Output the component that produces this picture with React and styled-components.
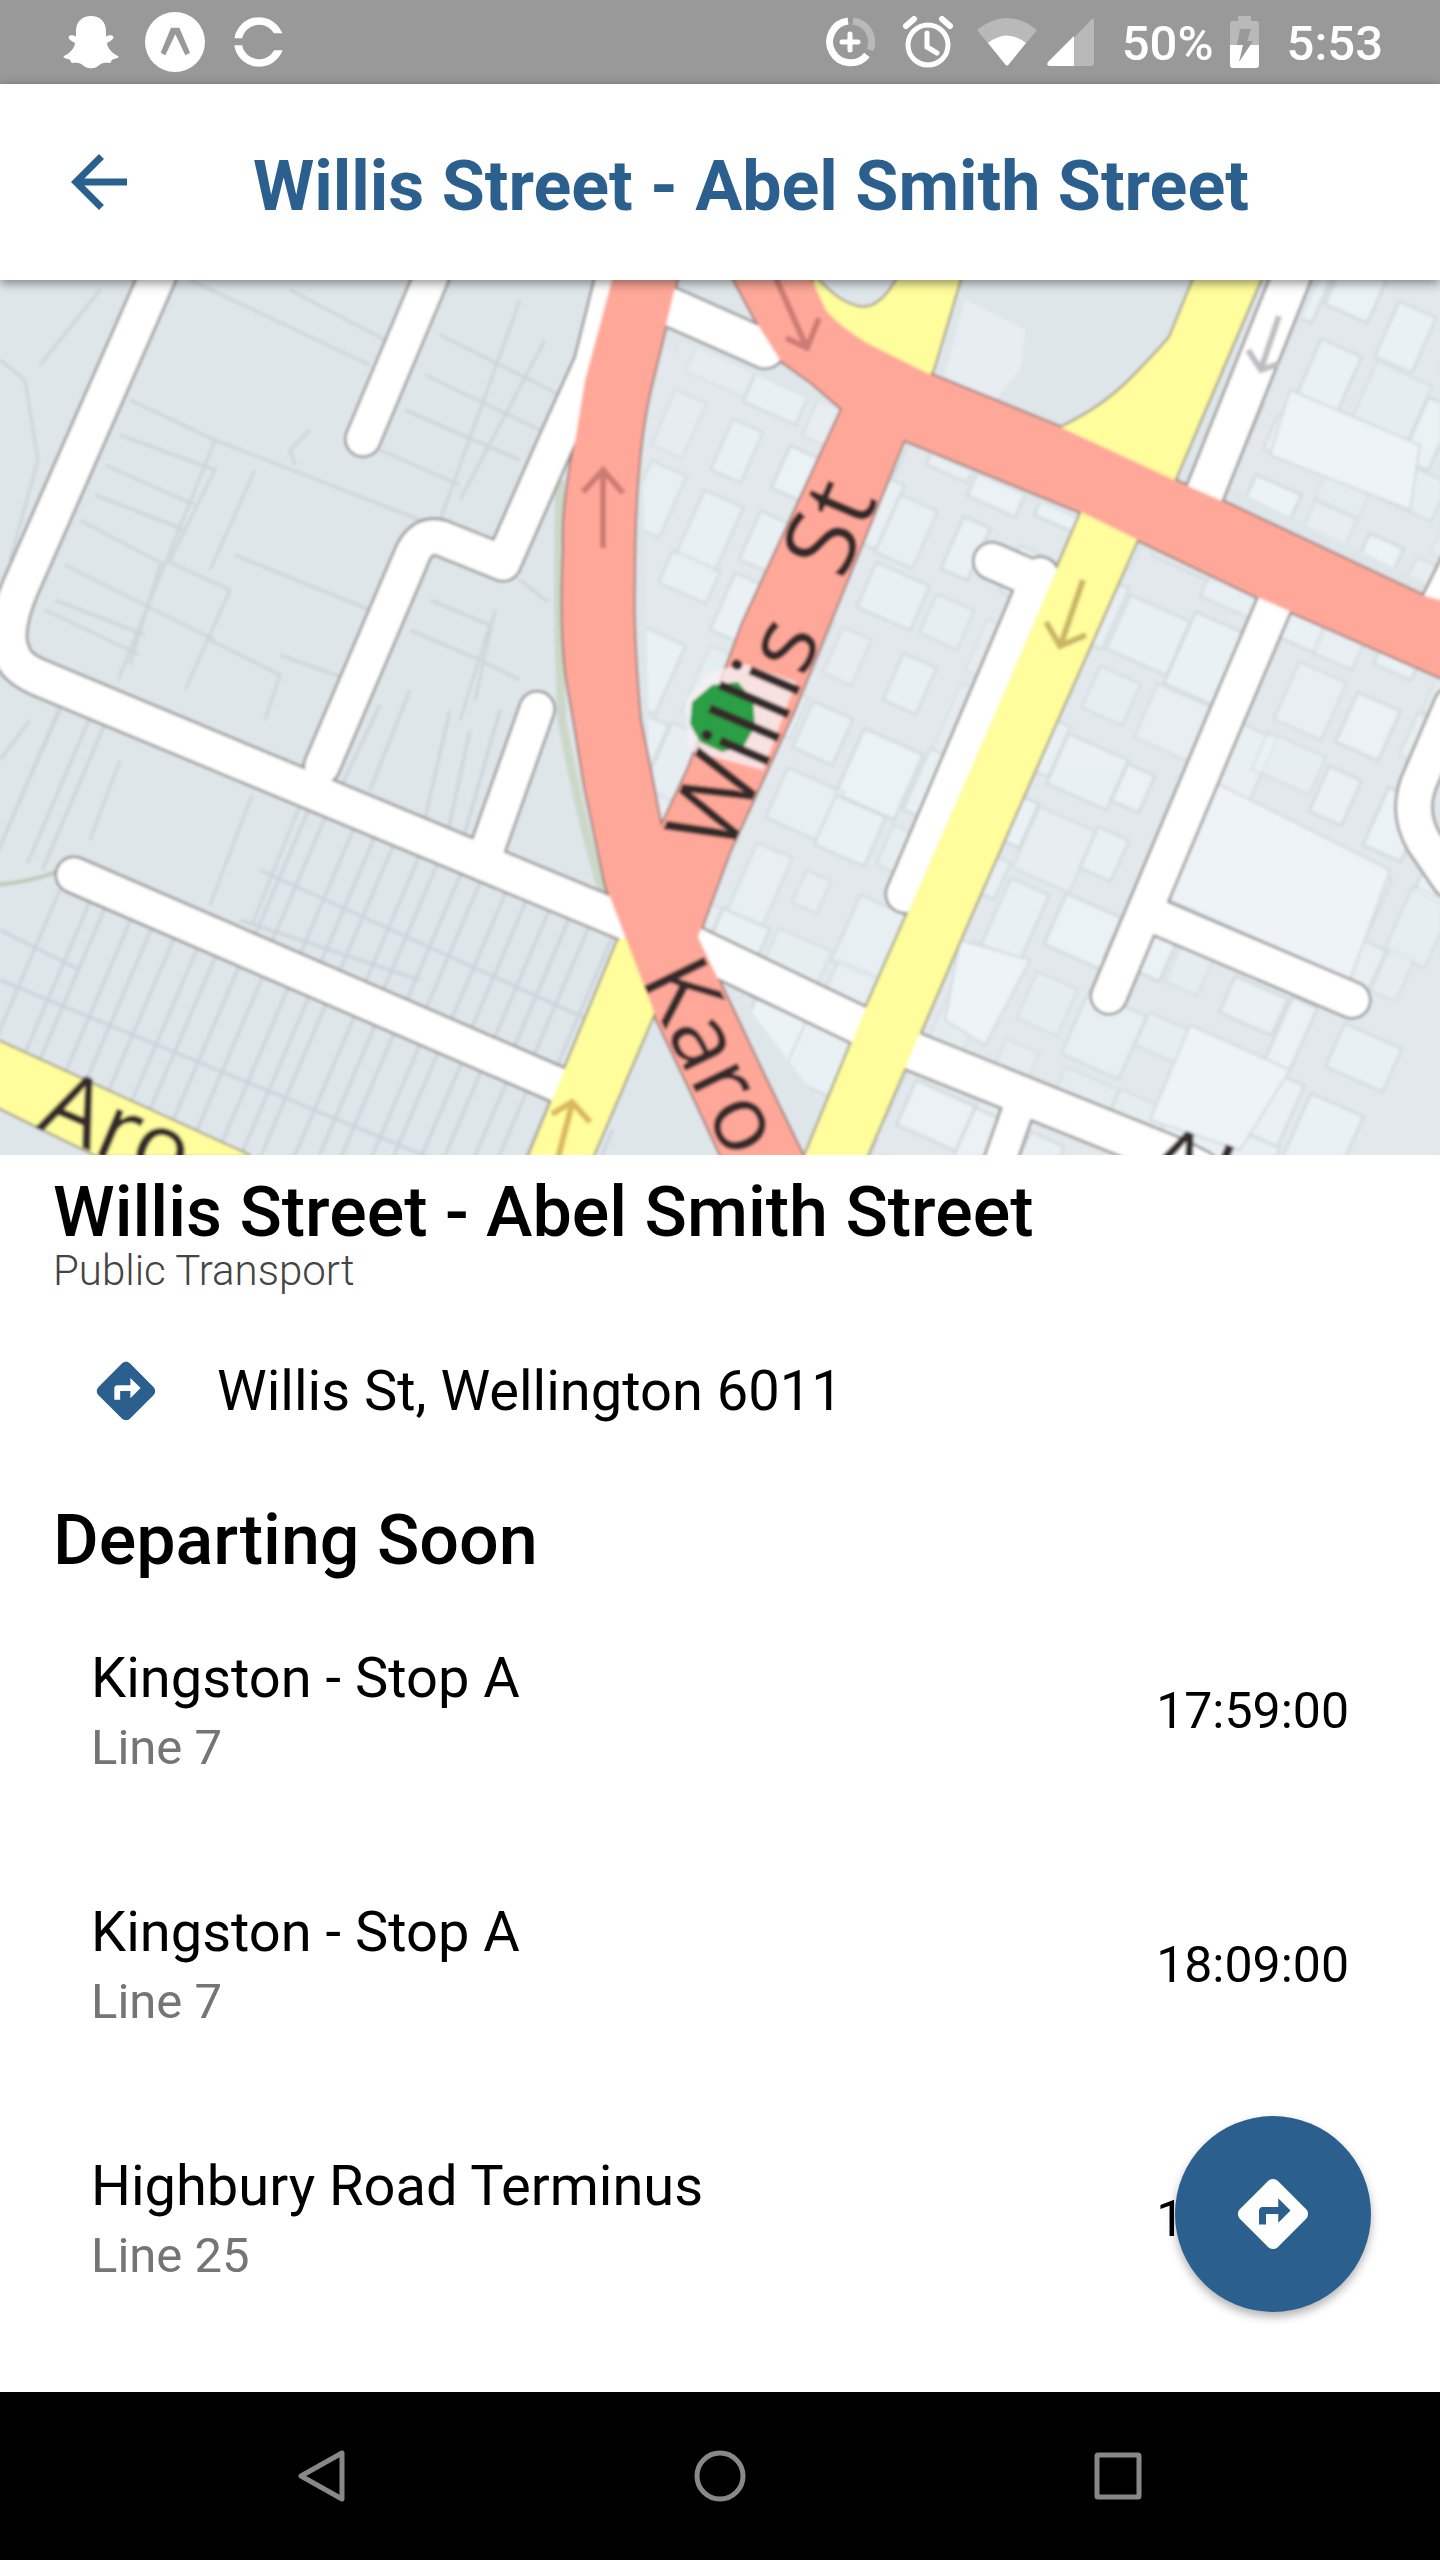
import React from "react";
import styled, { createGlobalStyle } from "styled-components";
import { MdArrowBack, MdDirections } from "react-icons/md";

const GlobalStyle = createGlobalStyle`
  * { box-sizing: border-box; }
  body { margin: 0; background: #fff; }
  h1, h2, p, ul { margin: 0; padding: 0; }
  ul { list-style: none; }
  button { border: 0; padding: 0; background: none; font: inherit; cursor: pointer; }
  svg { display: block; }
`;

const brand = "#2b5f8e";

const Screen = styled.div`
  min-height: 100vh;
  display: flex;
  flex-direction: column;
  background: #fff;
  color: #000;
  font-family: Roboto, "Noto Sans", sans-serif;
`;

const StatusBar = styled.div`
  height: 84px;
  padding: 0 57px 0 62px;
  display: flex;
  align-items: center;
  justify-content: space-between;
  background: #999;
  color: #fff;
  font-size: 49px;
  line-height: 58px;
  font-weight: 500;
`;

const StatusGroup = styled.div`
  display: flex;
  align-items: center;
  gap: ${(p) => p.$gap}px;
`;

const StatusText = styled.span`
  padding-top: 4px;
`;

const Header = styled.header`
  position: relative;
  z-index: 1;
  height: 196px;
  padding: 0 57px;
  display: flex;
  align-items: center;
  gap: 112px;
  background: #fff;
  box-shadow: 0 3px 10px rgba(0, 0, 0, 0.45);
`;

const BackButton = styled.button`
  color: ${brand};
`;

const HeaderTitle = styled.h1`
  padding-top: 8px;
  color: ${brand};
  font-size: 70px;
  line-height: 82px;
  font-weight: 700;
`;

const MapFrame = styled.div`
  overflow: hidden;
  svg { width: 100%; height: auto; }
`;

const Content = styled.main`
  position: relative;
  flex: 1;
  padding-bottom: 40px;
`;

const PlaceSection = styled.section`
  padding: 19px 53px 0;
`;

const SectionTitle = styled.h2`
  font-size: 70px;
  line-height: 76px;
  font-weight: 500;
`;

const PlaceKind = styled.p`
  color: #444;
  font-size: 42px;
  line-height: 42px;
  font-weight: 300;
`;

const AddressRow = styled.div`
  padding: 64px 91px 0;
  display: flex;
  align-items: center;
  gap: 56px;
  font-size: 56px;
  line-height: 66px;
  svg { color: ${brand}; }
`;

const DepartureSection = styled.section`
  padding-top: 76px;
`;

const DepartureHeading = styled(SectionTitle)`
  padding: 0 53px;
`;

const DepartureList = styled.ul`
  padding-top: 6px;
`;

const DepartureRow = styled.li`
  height: 254px;
  padding: 0 91px;
  display: flex;
  align-items: center;
  justify-content: space-between;
`;

const StopDetails = styled.div`
  display: flex;
  flex-direction: column;
  gap: 8px;
`;

const StopName = styled.span`
  font-size: 56px;
  line-height: 66px;
`;

const LineName = styled.span`
  color: #757575;
  font-size: 49px;
  line-height: 58px;
`;

const DepartureTime = styled.time`
  font-size: 50px;
  line-height: 58px;
`;

const DirectionsButton = styled.button`
  position: absolute;
  right: 69px;
  bottom: 80px;
  width: 196px;
  height: 196px;
  display: grid;
  place-items: center;
  border-radius: 50%;
  background: ${brand};
  color: #fff;
  box-shadow: 0 5px 10px rgba(0, 0, 0, 0.3);
`;

const NavBar = styled.nav`
  height: 168px;
  padding: 0 123px;
  display: flex;
  background: #000;
`;

const NavButton = styled.button`
  flex: 1;
  display: grid;
  place-items: center;
`;

/* ---------- status icons ---------- */

const Ghost = () => (
  <svg width="58" height="56" viewBox="36 44 174 168" fill="#fff">
    <path d="M123 50C150 50 168 68 168 95V112C175 106 188 106 190 112C192 120 178 126 172 130C168 134 180 160 204 170C210 174 198 178 186 181C183 184 184 190 180 191C170 190 160 190 152 194C142 202 136 207 123 207C110 207 104 202 94 194C86 190 76 190 66 191C62 190 63 184 60 181C48 178 36 174 42 170C66 160 78 134 74 130C68 126 54 120 56 112C58 106 71 106 78 112V95C78 68 96 50 123 50Z" />
  </svg>
);

const ExpoBadge = () => (
  <svg width="60" height="60" viewBox="285 36 180 180">
    <circle cx="375" cy="126" r="90" fill="#fff" />
    <path d="M363 83H388L420 158L406 166L376 103L346 166L332 158Z" fill="#999" />
  </svg>
);

const SplitRing = () => (
  <svg width="54" height="50" viewBox="541 50 162 150">
    <circle cx="628" cy="125" r="63" fill="none" stroke="#fff" strokeWidth="23" />
    <path d="M541 114H600V135H541ZM650 99H703V150H650Z" fill="#999" />
  </svg>
);

const DataSaver = () => (
  <svg width="50" height="50" viewBox="0 0 50 50" fill="none" strokeWidth="7">
    <path d="M23 4A21 21 0 1 0 42 38" stroke="#fff" />
    <path d="M28 4A21 21 0 0 1 45 33" stroke="#b9b9b9" />
    <path d="M25 17V33M17 25H33" stroke="#fff" strokeWidth="5" strokeLinecap="round" />
  </svg>
);

const Alarm = () => (
  <svg width="50" height="52" viewBox="0 0 50 52" fill="none" stroke="#fff" strokeWidth="5">
    <circle cx="25" cy="29" r="20" />
    <path d="M24 17V31L34 37" strokeLinecap="round" />
    <path d="M3 10L11 3M47 10L39 3" strokeWidth="6" strokeLinecap="round" />
  </svg>
);

const Wifi = () => (
  <svg width="60" height="48" viewBox="0 0 60 48">
    <path d="M0 12Q30 -12 60 12L32 46Q30 49 28 46Z" fill="#b9b9b9" />
    <path d="M11 25Q30 10 49 25L32 46Q30 49 28 46Z" fill="#fff" />
  </svg>
);

const Signal = () => (
  <svg width="47" height="48" viewBox="0 0 47 48">
    <path d="M45 1Q47 0 47 3V45Q47 48 44 48H20V27Z" fill="#b9b9b9" />
    <path d="M27 18V48H3Q-1 48 1 44Z" fill="#fff" />
  </svg>
);

const Battery = () => (
  <svg width="29" height="52" viewBox="0 0 29 52">
    <path d="M8 0H21V5H27Q29 5 29 8V29H0V8Q0 5 3 5H8Z" fill="#b9b9b9" />
    <path d="M0 29H29V49Q29 52 26 52H3Q0 52 0 49Z" fill="#fff" />
    <path d="M10 13H21L17 25H23L9 46L13 29H7Z" fill="#999" />
  </svg>
);

/* ---------- street map ---------- */

const streets = [
  { d: "M158 -5L26 295Q0 350 12 374Q16 388 40 398L640 648", w: 35 },
  { d: "M432 -5L363 159", w: 33 },
  { d: "M614 -5L592 83L554 167L503 283L441 258Q420 252 410 280L322 486", w: 34 },
  { d: "M537 429L487 570", w: 33 },
  { d: "M74 595L570 810", w: 34 },
  { d: "M655 20L765 69", w: 37 },
  { d: "M690 664L917 773L1175 877L1200 890", w: 37 },
  { d: "M1023 815L995 895", w: 30 },
  { d: "M992 281L1045 304", w: 35 },
  { d: "M1040 296L905 614", w: 36 },
  { d: "M1292 -5L1200 225", w: 37 },
  { d: "M1277 318L1225 440L1109 716", w: 34 },
  { d: "M1155 636L1352 720", w: 34 },
  { d: "M1452 425L1422 495Q1405 530 1424 562L1450 600", w: 34 },
  { d: "M1460 270L1430 330", w: 24 },
];

const mainRoads = [
  "M618 660L528 878H592L664 710L650 650Z",
  "M-4 760L250 876H98L-4 826Z",
  "M815 -4Q836 22 858 27T899 -4H961L933 90L920 110L860 80L812 10Z",
  "M1195 -4H1262L1173 204L1130 215L1060 148Q1103 128 1133 97Q1163 66 1170 57Z",
  "M1083 228L1138 258L1057 440L970 637L920 753L866 878H804L865 730L906 637L995 433Z",
];

const trunkRoads = [
  "M613 -4L585 100L574 167Q562 230 564 267Q560 350 567 400L574 440L585 507L606 607L638 690L657 740L689 807L722 878H804L766 800L720 703L698 657L729 573L793 433L904 160L1083 233L1138 260L1257 317L1444 399V321L1422 315L1220 220L1179 202L1060 147L927 93L867 63Q838 45 826 30L810 -4H732L761 50L780 80L812 103L842 129L743 343L689 487L661 547L650 490L640 440Q632 350 634 300Q634 180 650 110L678 -4Z",
];

const arrows = [
  { d: "M603 268V192M583 212L603 190L623 213", c: "#cc7a74" },
  { d: "M775 -4L806 66M786 58L807 68L819 38", c: "#cc7a74" },
  { d: "M1083 300L1061 364M1046 342L1060 366L1086 355", c: "#c9b566" },
  { d: "M558 878L572 824M552 834L572 822L590 842", c: "#d9b95c" },
  { d: "M1279 36L1261 89M1248 70L1261 90L1278 84", c: "#bdbdc0" },
];

const parcels = [
  "M100 10L40 85M0 80L25 100L38 180L10 280",
  "M190 0L370 85M130 120L215 160L420 240M290 10L385 60M310 150L290 170L295 185",
  "M120 155L215 190L170 280M105 185L195 225M95 215L185 250M80 240L165 285M65 285L215 360",
  "M215 160L118 400M255 190L210 290M165 280L230 310L185 410M235 275L370 330",
  "M440 55L560 115M425 95L540 150M405 130L520 180M380 170L460 205M520 20L440 240M545 60L460 220",
  "M55 320L145 355M160 285L130 385M45 330L140 375M210 360L280 395L265 440M280 375L350 400",
  "M430 320L490 345L460 440M410 350L480 380L520 400M520 300L548 322M495 330L475 420",
  "M0 480L30 440M20 520L60 430M120 480L90 560M252 515L210 625M300 525L252 645",
];

const wobble = (n) => {
  const v = Math.sin(n * 12.9898) * 43758.5453;
  return v - Math.floor(v);
};

const hatch = [];
for (let i = 0; i < 26; i += 1) {
  const x = 60 + i * 22 + wobble(i) * 8;
  const y = 418 + (x - 40) * 0.4157;
  if (x < 115 || x > 300) hatch.push(`M${x} ${y}L${x - 62} ${y + 145}`);
  const fy = 615 + (x - 72) * 0.434;
  hatch.push(`M${x} ${fy}L${x - 72} ${fy + 168}`);
}
hatch.push("M260 590L600 745M0 700L520 915M0 650L80 690M240 640L420 700");
hatch.push("M380 425L330 530M410 410L370 510M450 430L420 560M470 450L445 565M500 430L460 570");

const buildings = [];
for (let row = 0; row < 17; row += 1) {
  for (let col = 0; col < 15; col += 1) {
    const n = row * 31 + col * 7 + 3;
    buildings.push({
      x: 660 + col * 62 + wobble(n) * 14,
      y: -640 + row * 76 + wobble(n + 1) * 16,
      w: 26 + wobble(n + 2) * 42,
      h: 34 + wobble(n + 3) * 46,
      o: 0.3 + wobble(n + 4) * 0.6,
    });
  }
}

const StreetMap = () => (
  <svg viewBox="0 0 1440 875" role="img" aria-label="Map of Willis St">
    <defs>
      <filter id="soft" x="0" y="0" width="100%" height="100%">
        <feGaussianBlur stdDeviation="1.8" />
      </filter>
      <clipPath id="builtUp">
        <path d="M680 60L830 130L1440 400V875H860L720 690L640 560Z" />
        <path d="M1320 0H1440V310L1225 205Z" />
        <path d="M640 60L840 130L680 500L650 500Z" />
      </clipPath>
    </defs>
    <rect width="1440" height="875" fill="#dfe6ea" />
    <g filter="url(#soft)">
      <rect x="-10" y="-10" width="1460" height="895" fill="#dfe6ea" />
      <g clipPath="url(#builtUp)">
        <rect x="640" width="800" height="875" fill="#e2e8eb" />
        <g transform="rotate(24)">
          {buildings.map((b, i) => (
            <rect key={i} x={b.x} y={b.y} width={b.w} height={b.h} fill="#edf4f7" stroke="#d3dadd" strokeWidth="3" opacity={b.o} />
          ))}
        </g>
        <path d="M1190 490L1390 590L1350 700L1170 620ZM1190 745L1290 790L1240 870L1150 840ZM960 660L1030 680L985 765L945 740Z" fill="#eef3f7" stroke="#d3dadd" strokeWidth="2" />
        <path d="M1290 110L1420 165L1410 230L1270 175Z" fill="#eef3f7" stroke="#d3dadd" strokeWidth="2" />
      </g>
      <path d="M965 20L1025 50L1020 90L990 125L945 95Z" fill="#e8edf1" />
      <g fill="none" stroke="#ccd6d9" strokeWidth="3">
        {parcels.map((d) => <path key={d} d={d} />)}
      </g>
      <g fill="none" stroke="#ccd3da" strokeWidth="3">
        {hatch.map((d) => <path key={d} d={d} />)}
      </g>
      <path d="M-5 605Q30 602 56 592" fill="none" stroke="#bcc8b2" strokeWidth="4" />
      <path d="M560 200Q556 330 562 440Q580 540 605 620" fill="none" stroke="#cbd8c8" strokeWidth="9" />

      <g fill="none" stroke="#918d8d" strokeLinecap="round" strokeLinejoin="round">
        {streets.map((s) => <path key={s.d} d={s.d} strokeWidth={s.w + 5} />)}
      </g>
      <g fill="none" stroke="#98927c" strokeWidth="4">
        {mainRoads.map((d) => <path key={d} d={d} />)}
      </g>
      <g fill="none" stroke="#997974" strokeWidth="4">
        {trunkRoads.map((d) => <path key={d} d={d} />)}
      </g>
      <g fill="none" stroke="#fff" strokeLinecap="round" strokeLinejoin="round">
        {streets.map((s) => <path key={s.d} d={s.d} strokeWidth={s.w} />)}
      </g>
      <g fill="#fffd9c">
        {mainRoads.map((d) => <path key={d} d={d} />)}
      </g>
      <g fill="#ffa899">
        {trunkRoads.map((d) => <path key={d} d={d} />)}
      </g>
      <g fill="none" strokeWidth="6">
        {arrows.map((a) => <path key={a.d} d={a.d} stroke={a.c} />)}
      </g>

      <path d="M708 392L745 384L796 402L763 490L688 470L686 420Z" fill="#f6eff2" opacity="0.8" />
      <path d="M712 405L738 402L753 420L755 446L744 466L722 472L700 462L690 444L692 422Z" fill="#2c9f45" />

      <g fill="#352a2b" fontFamily='"Noto Sans", "Open Sans", sans-serif' fontSize="99">
        <text transform="translate(728 578) rotate(-67)">Willis</text>
        <text transform="translate(843 302) rotate(-67)">St</text>
        <text transform="translate(640 698) rotate(64)" fontSize="94">Karo</text>
        <text transform="translate(35 848) rotate(23)" fontSize="94">Aro</text>
        <text transform="translate(1136 903) rotate(23)" fontSize="94">Abel</text>
      </g>
    </g>
  </svg>
);

const departures = [
  { stop: "Kingston - Stop A", line: "Line 7", time: "17:59:00" },
  { stop: "Kingston - Stop A", line: "Line 7", time: "18:09:00" },
  { stop: "Highbury Road Terminus", line: "Line 25", time: "18:14:00" },
];

export default function App() {
  return (
    <Screen>
      <GlobalStyle />
      <StatusBar>
        <StatusGroup $gap={25}>
          <Ghost />
          <ExpoBadge />
          <SplitRing />
        </StatusGroup>
        <StatusGroup $gap={24}>
          <StatusGroup $gap={28}>
            <DataSaver />
            <Alarm />
          </StatusGroup>
          <StatusGroup $gap={28}>
            <StatusGroup $gap={10}>
              <Wifi />
              <Signal />
            </StatusGroup>
            <StatusGroup $gap={16}>
              <StatusText>50%</StatusText>
              <Battery />
            </StatusGroup>
            <StatusText>5:53</StatusText>
          </StatusGroup>
        </StatusGroup>
      </StatusBar>

      <Header>
        <BackButton aria-label="Back">
          <MdArrowBack size={84} />
        </BackButton>
        <HeaderTitle>Willis Street - Abel Smith Street</HeaderTitle>
      </Header>

      <MapFrame>
        <StreetMap />
      </MapFrame>

      <Content>
        <PlaceSection>
          <SectionTitle>Willis Street - Abel Smith Street</SectionTitle>
          <PlaceKind>Public Transport</PlaceKind>
        </PlaceSection>
        <AddressRow>
          <MdDirections size={70} />
          <span>Willis St, Wellington 6011</span>
        </AddressRow>
        <DepartureSection>
          <DepartureHeading>Departing Soon</DepartureHeading>
          <DepartureList>
            {departures.map((d) => (
              <DepartureRow key={d.time}>
                <StopDetails>
                  <StopName>{d.stop}</StopName>
                  <LineName>{d.line}</LineName>
                </StopDetails>
                <DepartureTime>{d.time}</DepartureTime>
              </DepartureRow>
            ))}
          </DepartureList>
        </DepartureSection>
        <DirectionsButton aria-label="Directions">
          <MdDirections size={84} />
        </DirectionsButton>
      </Content>

      <NavBar>
        <NavButton aria-label="System back">
          <svg width="52" height="56" viewBox="0 0 52 56" fill="none" stroke="#888" strokeWidth="5" strokeLinejoin="round">
            <path d="M46 5V51L5 28Z" />
          </svg>
        </NavButton>
        <NavButton aria-label="Home">
          <svg width="52" height="52" viewBox="0 0 52 52" fill="none" stroke="#888" strokeWidth="5">
            <circle cx="26" cy="26" r="23" />
          </svg>
        </NavButton>
        <NavButton aria-label="Recent apps">
          <svg width="48" height="48" viewBox="0 0 48 48" fill="none" stroke="#888" strokeWidth="5" strokeLinejoin="round">
            <rect x="3" y="3" width="42" height="42" rx="1" />
          </svg>
        </NavButton>
      </NavBar>
    </Screen>
  );
}
